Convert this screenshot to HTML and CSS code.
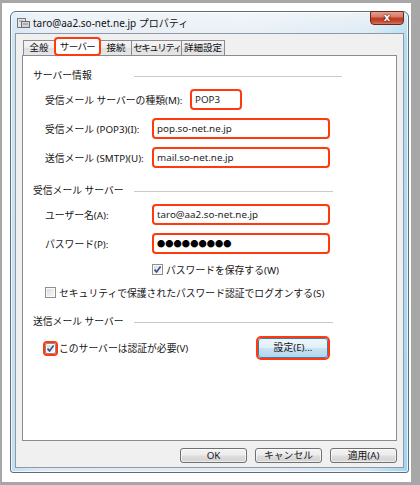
FILE: index.html
```html
<!DOCTYPE html>
<html lang="ja">
<head>
<meta charset="utf-8">
<title>taro@aa2.so-net.ne.jp プロパティ</title>
<link rel="stylesheet" href="styles.css">
</head>
<body>
<div class="shot">
  <div class="win">
    <div class="titlebar">
      <svg class="appicon" viewBox="0 0 13 13" aria-hidden="true">
        <rect x="0.5" y="2.5" width="8" height="9" fill="#e8e8e8" stroke="#7a7a7a"/>
        <rect x="4.5" y="5.5" width="8" height="6" fill="#d0d4d8" stroke="#6c6c6c"/>
        <line x1="2" y1="5" x2="6" y2="5" stroke="#8a8a8a"/>
        <line x1="6" y1="8" x2="11" y2="8" stroke="#8a8a8a"/>
      </svg>
      <span class="title">taro@aa2.so-net.ne.jp プロパティ</span>
      <div class="close">x</div>
    </div>
    <div class="client">
      <div class="tabs">
        <div class="tab t-general">全般</div>
        <div class="tab t-server active">サーバー</div>
        <div class="tab t-conn">接続</div>
        <div class="tab t-sec">セキュリティ</div>
        <div class="tab t-adv">詳細設定</div>
      </div>
      <div class="panel">
        <div class="group">
          <div class="group-h wide"><span>サーバー情報</span><i class="rule"></i></div>
          <div class="frow"><span class="lbl long">受信メール サーバーの種類(M):</span><div class="field short">POP3</div></div>
          <div class="frow"><span class="lbl">受信メール (POP3)(I):</span><div class="field">pop.so-net.ne.jp</div></div>
          <div class="frow"><span class="lbl">送信メール (SMTP)(U):</span><div class="field">mail.so-net.ne.jp</div></div>
        </div>
        <div class="group g-in">
          <div class="group-h"><span>受信メール サーバー</span><i class="rule"></i></div>
          <div class="frow"><span class="lbl">ユーザー名(A):</span><div class="field">taro@aa2.so-net.ne.jp</div></div>
          <div class="frow"><span class="lbl">パスワード(P):</span><div class="field pw">●●●●●●●●●</div></div>
          <div class="check save"><span class="cb on"><svg viewBox="0 0 9 9"><path d="M1.5 4.6 L3.6 6.9 L7.6 1.6" fill="none" stroke="#3d5185" stroke-width="1.6"/></svg></span><span>パスワードを保存する(W)</span></div>
          <div class="check secure"><span class="cb"></span><span>セキュリティで保護されたパスワード認証でログオンする(S)</span></div>
        </div>
        <div class="group g-out">
          <div class="group-h"><span>送信メール サーバー</span><i class="rule"></i></div>
          <div class="auth-row">
            <span class="cb on marked"><svg viewBox="0 0 9 9"><path d="M1.5 4.6 L3.6 6.9 L7.6 1.6" fill="none" stroke="#3d5185" stroke-width="1.6"/></svg></span>
            <span class="auth-lbl">このサーバーは認証が必要(V)</span>
            <div class="btn-set">設定(E)...</div>
          </div>
        </div>
      </div>
      <div class="buttons">
        <div class="btn">OK</div>
        <div class="btn">キャンセル</div>
        <div class="btn">適用(A)</div>
      </div>
    </div>
  </div>
</div>
</body>
</html>
```
FILE: styles.css
```css
* { box-sizing: border-box; }
html, body { margin: 0; padding: 0; }
body {
  width: 420px;
  height: 485px;
  overflow: hidden;
  background: #fff;
  color: #151515;
  font-family: "Noto Sans", "Noto Sans CJK JP", sans-serif;
  font-size: 9.8px;
}
.shot {
  width: 420px;
  height: 485px;
  border-style: solid;
  border-color: #a7a7a7;
  border-width: 3px 9px 3px 2px;
  padding: 8px 0 0 8px;
  background: #fff;
}
.win {
  width: 399px;
  height: 462px;
  border: 1px solid #5f6d7b;
  border-radius: 6px 6px 3px 3px;
  padding: 0 4px 4px 4px;
  display: flex;
  flex-direction: column;
  background:
    linear-gradient(180deg, rgba(255,255,255,0.55) 0%, rgba(255,255,255,0.15) 6%, rgba(255,255,255,0) 100%),
    linear-gradient(90deg, #c4dff0 0%, #dfe9f3 8%, #e2ebf4 60%, #d3e4f1 90%, #9fd6ef 100%);
  box-shadow: inset 0 0 0 1px rgba(255,255,255,0.7);
}
.titlebar {
  height: 21px;
  flex: none;
  display: flex;
  align-items: center;
  padding-left: 2px;
}
.appicon { width: 13px; height: 13px; flex: none; }
.title {
  margin-left: 3px;
  font-size: 10px;
  line-height: 14px;
  white-space: nowrap;
  color: #111;
}
.close {
  margin-left: auto;
  align-self: flex-start;
  margin-top: -1px;
  width: 34px;
  height: 14px;
  border: 1px solid #6e2619;
  border-radius: 2px 2px 4px 4px;
  background: linear-gradient(180deg, #e4a091 0%, #d77a65 40%, #bf3a22 52%, #c24a32 78%, #d77660 100%);
  color: #fff;
  font-family: "DejaVu Sans", sans-serif;
  font-weight: bold;
  font-size: 10px;
  line-height: 11px;
  text-align: center;
  text-shadow: 0 0 2px #4d140b, 0 0 1px #4d140b;
}
.client {
  flex: 1;
  border: 1px solid #8d9aa7;
  background: #f0f0f0;
  display: flex;
  flex-direction: column;
}
.tabs {
  height: 21px;
  flex: none;
  display: flex;
  align-items: flex-end;
  padding: 3px 0 0 7px;
}
.tab {
  height: 15px;
  border: 1px solid #898c95;
  border-bottom: none;
  border-right-width: 0;
  background: linear-gradient(180deg, #f4f4f4 0%, #ececec 50%, #dfdfdf 52%, #e6e6e6 100%);
  font-family: "Noto Sans CJK JP", sans-serif;
  font-size: 9.5px;
  line-height: 13px;
  text-align: center;
  white-space: nowrap;
  color: #111;
}
.tab.t-adv { border-right-width: 1px; }
.t-general { width: 31px; }
.t-server { width: 47px; letter-spacing: -0.6px; }
.t-conn { width: 30px; border-left-width: 0; }
.t-sec { width: 50px; letter-spacing: -1.5px; text-indent: 1px; }
.t-adv { width: 44px; }
.tab.active {
  position: relative;
  z-index: 1;
  height: 19px;
  margin-bottom: -1px;
  border: 2px solid #ff3a0e;
  border-radius: 4px;
  background: #fff;
  line-height: 15px;
}
.panel {
  height: 386px;
  flex: none;
  margin: 0 6px;
  border: 1px solid #898c95;
  background: #fff;
  padding-top: 13px;
}
.group-h {
  display: grid;
  grid-template-columns: 101px 1fr;
  align-items: center;
  width: 300px;
  height: 14px;
  margin: 0 0 2px 10px;
  line-height: 14px;
  white-space: nowrap;
}
.group-h.wide { width: 309px; }
.rule { display: block; height: 1px; background: #cacaca; }
.g-in { margin-top: 12px; }
.g-out { margin-top: 16px; }
.frow {
  display: flex;
  align-items: center;
  height: 29px;
  padding-left: 22px;
}
.lbl { width: 107px; flex: none; white-space: nowrap; }
.lbl.long { width: 145px; }
.field {
  width: 178px;
  height: 21px;
  border: 2px solid #ff3a0e;
  border-radius: 4px;
  padding-left: 3px;
  line-height: 17px;
  background: #fff;
  white-space: nowrap;
  color: #1e1e1e;
}
.field.short { width: 52px; }
.field.pw {
  font-family: "Noto Sans CJK JP", sans-serif;
  font-size: 8.2px;
  color: #000;
  letter-spacing: 0.1px;
}
.check {
  display: flex;
  align-items: center;
  gap: 3px;
  height: 13px;
  white-space: nowrap;
}
.check.save { margin-top: 5px; padding-left: 129px; }
.check.secure { margin-top: 10px; padding-left: 22px; }
.cb {
  width: 11px;
  height: 11px;
  flex: none;
  border: 1px solid #8f8f8f;
  background: linear-gradient(135deg, #d2d4d8 0%, #eceef0 60%, #f8f8f8 100%);
  box-shadow: inset 0 0 0 1px #fbfbfb;
  display: flex;
  align-items: center;
  justify-content: center;
}
.cb svg { width: 9px; height: 9px; }
.cb.marked {
  outline: 2px solid #ff3a0e;
  border-radius: 2px;
}
.auth-row {
  display: flex;
  align-items: center;
  height: 24px;
  margin-top: 7px;
  padding: 0 68px 0 22px;
  gap: 3px;
}
.auth-lbl { white-space: nowrap; }
.btn-set {
  margin-left: auto;
  width: 70px;
  height: 20px;
  border: 1px solid #3c7fb1;
  border-radius: 3px;
  outline: 2px solid #ff3a0e;
  background: linear-gradient(180deg, #eef6fb 0%, #e1eff8 48%, #c9e3f3 52%, #b4d6ec 100%);
  text-align: center;
  line-height: 18px;
  white-space: nowrap;
}
.buttons {
  display: flex;
  justify-content: flex-end;
  gap: 8px;
  padding: 7px 6px 0 0;
}
.btn {
  width: 67px;
  height: 15px;
  border: 1px solid #707070;
  border-radius: 3px;
  background: linear-gradient(180deg, #f3f3f3 0%, #ececec 48%, #dedede 52%, #d2d2d2 100%);
  box-shadow: inset 0 0 0 1px rgba(255,255,255,0.6);
  text-align: center;
  line-height: 13px;
  white-space: nowrap;
}
```
